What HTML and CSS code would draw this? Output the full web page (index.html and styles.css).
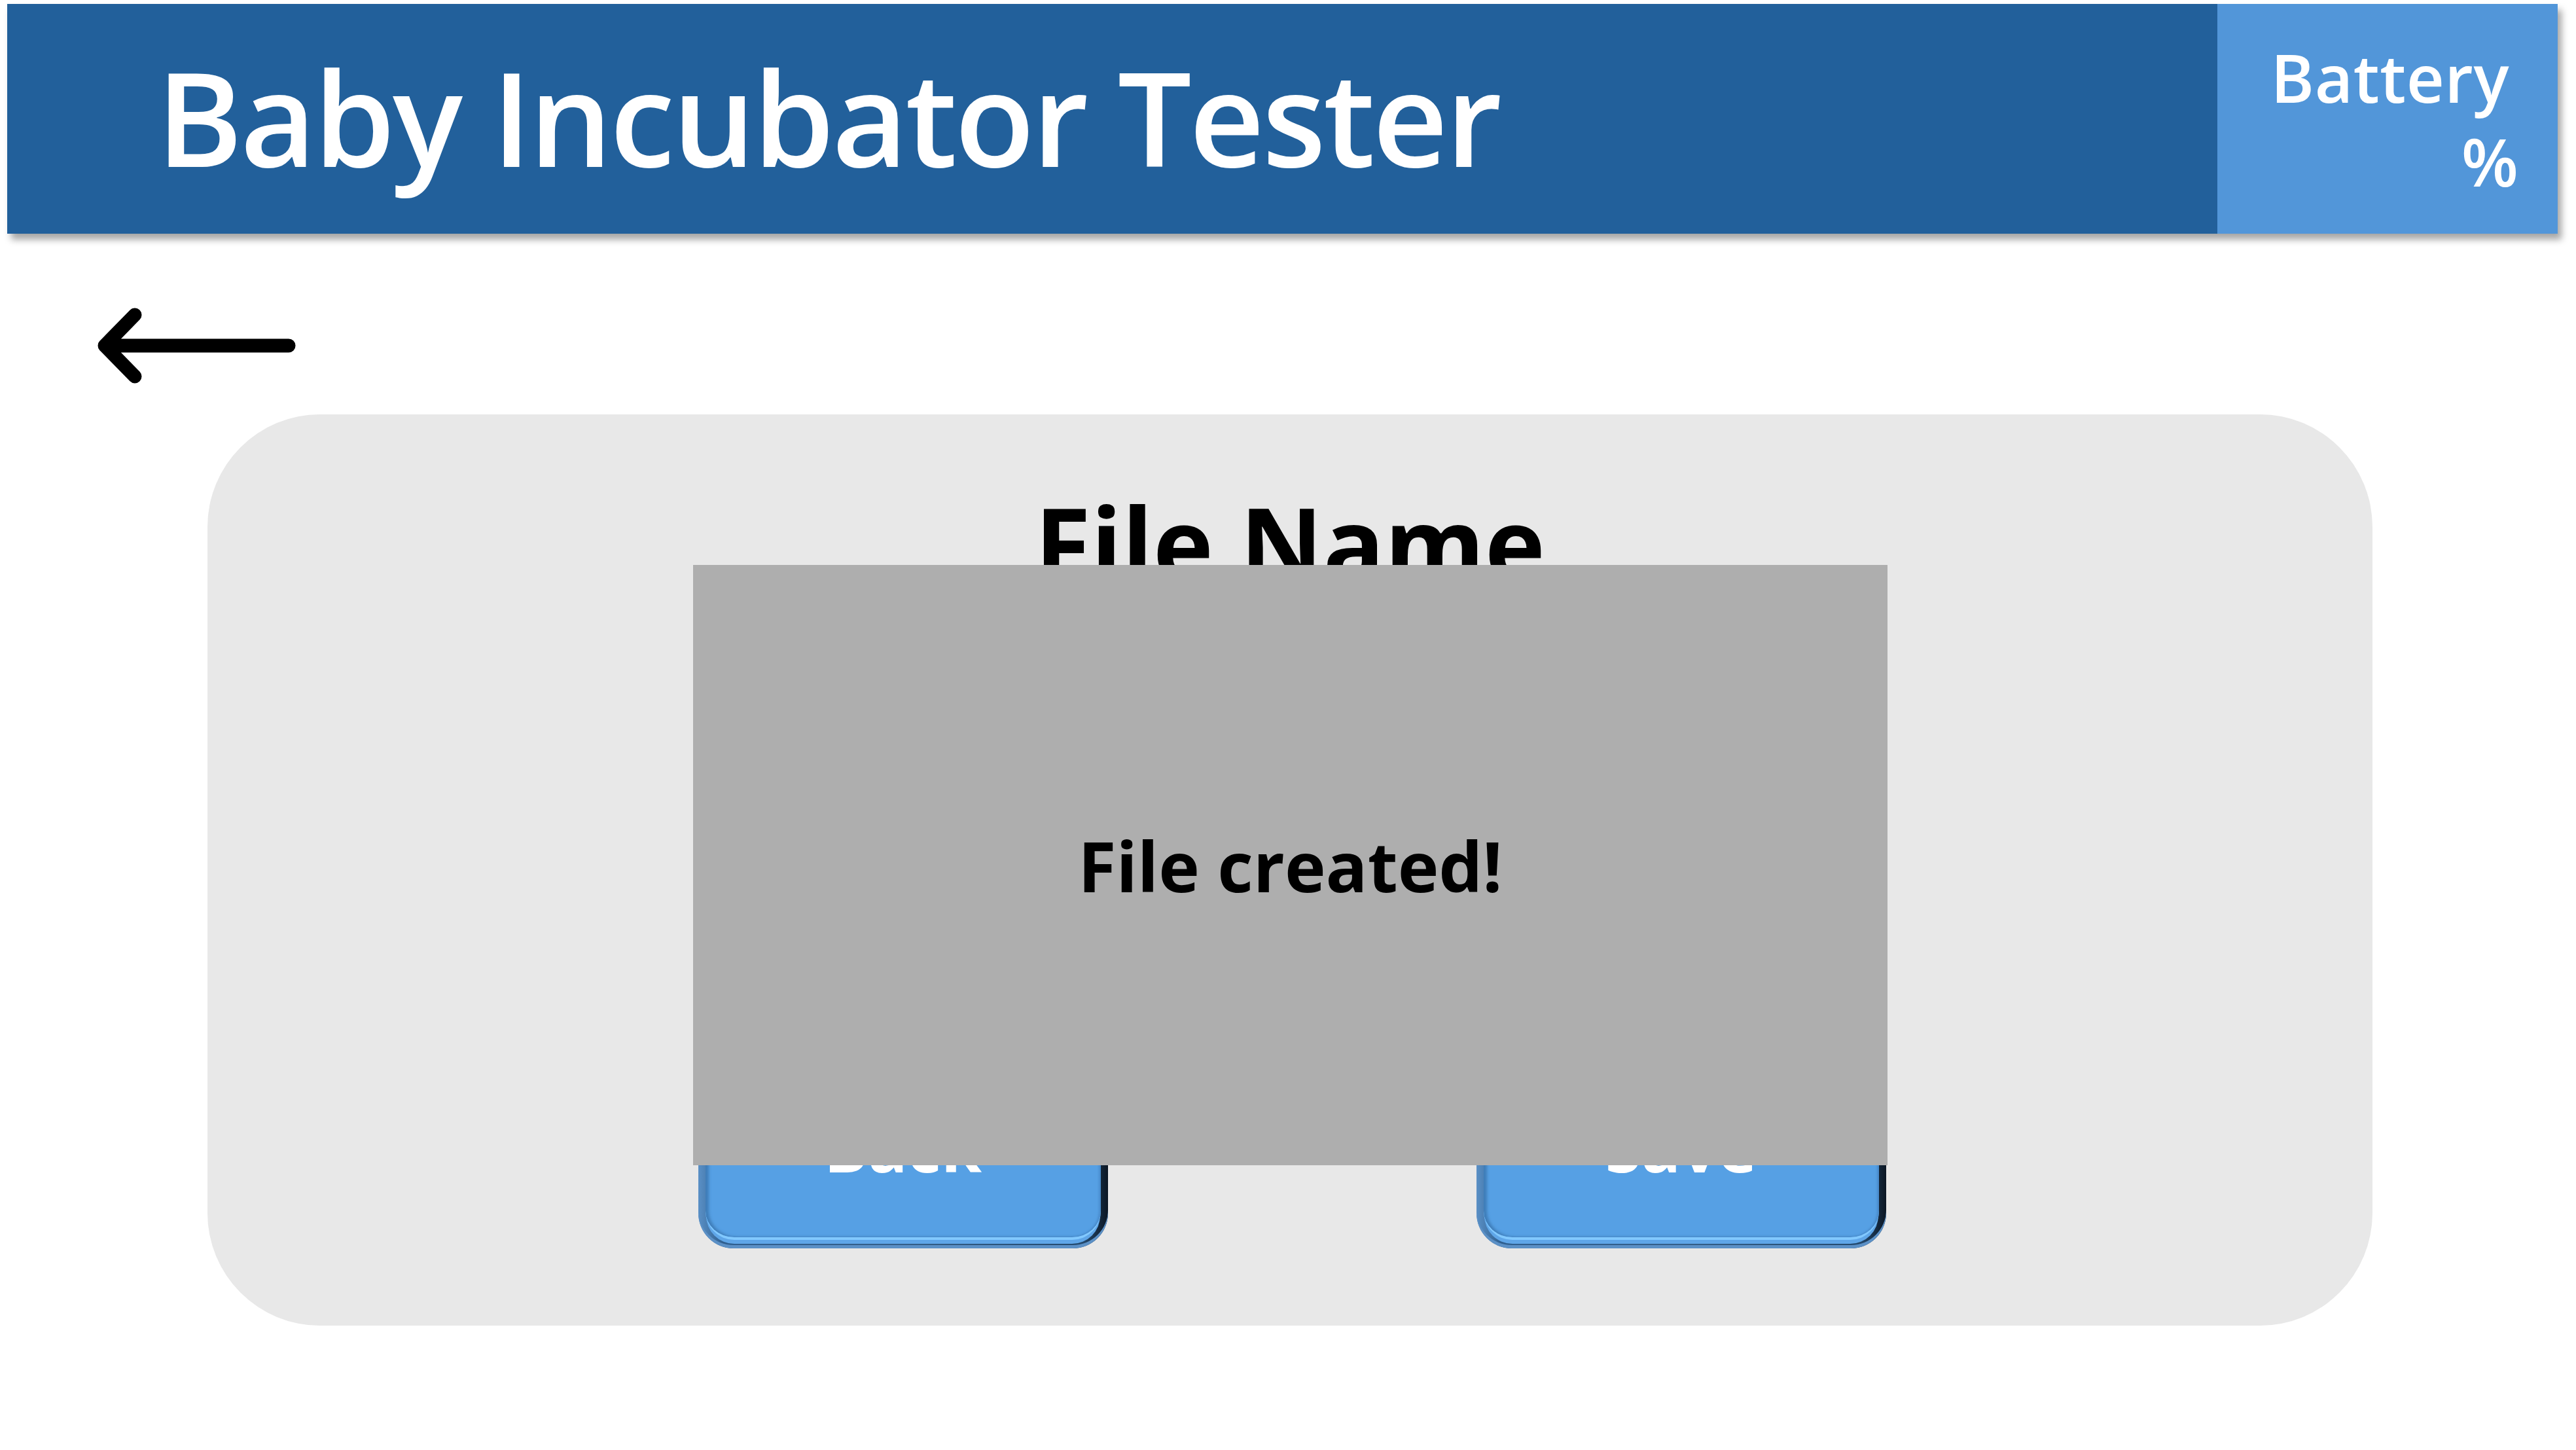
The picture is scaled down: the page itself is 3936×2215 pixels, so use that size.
FILE: index.html
```html
<!DOCTYPE html>
<html lang="en">
<head>
<meta charset="utf-8">
<title>Baby Incubator Tester</title>
<link rel="stylesheet" href="styles.css">
</head>
<body>
<header class="topbar">
  <h1 class="app-title">Baby Incubator Tester</h1>
  <div class="battery">
    <span class="battery-line">Battery</span>
    <span class="battery-line">%</span>
  </div>
</header>
<main class="page">
  <button class="back-link" aria-label="Back">
    <svg class="back-icon" viewBox="0 0 320 130" width="320" height="130">
      <path d="M301 63 H20 M66 16 L20 63 L66 110" fill="none" stroke="#000" stroke-width="21" stroke-linecap="round" stroke-linejoin="round"/>
    </svg>
  </button>
  <section class="card">
    <h2 class="card-title">File Name</h2>
    <div class="actions">
      <div class="btn"><div class="btn-face">Back</div></div>
      <div class="btn"><div class="btn-face">Save</div></div>
    </div>
    <div class="toast">File created!</div>
  </section>
</main>
</body>
</html>
```

FILE: styles.css
```css
* { box-sizing: border-box; }
html, body { margin: 0; padding: 0; background: #ffffff; }
body {
  width: 3936px;
  height: 2215px;
  overflow: hidden;
  font-family: "Open Sans", "Noto Sans", sans-serif;
}

.topbar {
  margin: 6px 28px 0 11px;
  height: 351px;
  background: #22609b;
  display: flex;
  align-items: stretch;
  box-shadow: 6px 9px 10px rgba(0, 0, 0, 0.35);
}

.app-title {
  flex: 1;
  margin: 0;
  padding: 0 0 8px 228px;
  display: flex;
  align-items: center;
  color: #ffffff;
  font-size: 200px;
  font-weight: 600;
  line-height: 1;
  letter-spacing: -3.8px;
}

.battery {
  width: 520px;
  background: #5296d9;
  display: flex;
  flex-direction: column;
  justify-content: center;
  align-items: flex-end;
  padding-right: 60px;
  color: #ffffff;
  font-size: 101px;
  font-weight: 600;
  line-height: 128px;
}
.battery-line { display: block; }
.battery-line:first-child { margin-right: 14px; letter-spacing: 0.5px; }

.page {
  display: flex;
  flex-direction: column;
}

.back-link {
  margin: 108px 0 0 140px;
  padding: 0;
  border: 0;
  background: none;
  width: 320px;
  height: 130px;
  display: block;
}
.back-icon { display: block; }

.card {
  position: relative;
  margin: 38px 0 0 317px;
  width: 3308px;
  height: 1392px;
  background: #e8e8e8;
  border-radius: 172px;
  display: flex;
  flex-direction: column;
  align-items: center;
  padding: 118px 0 118px 0;
}

.card-title {
  margin: 0;
  font-size: 156px;
  font-weight: 700;
  line-height: 1;
  color: #000000;
}

.actions {
  margin-top: auto;
  display: flex;
  gap: 563px;
  padding-left: 6px;
}

.btn {
  width: 626px;
  height: 306px;
  border-radius: 54px;
  background: linear-gradient(to right, #5a90c6 0%, #2f5f8f 6%, #355f88 50%, #24496d 94%, #0c1724 100%);
  padding: 9px 11px 13px 11px;
  box-shadow: inset 0 -5px 0 #5b90c6;
}

.btn-face {
  height: 100%;
  border-radius: 44px;
  background: #56a0e4;
  border-bottom: 4px solid #82c9ff;
  box-shadow: 0 7px 0 -1px #5fa6e8, inset 5px 0 4px #3f7db8, inset -3px 0 3px #4a8ccc;
  display: flex;
  align-items: center;
  justify-content: center;
  color: #ffffff;
  font-size: 100px;
  font-weight: 700;
  padding-top: 4px;
}

.toast {
  position: absolute;
  left: 742px;
  top: 230px;
  width: 1825px;
  height: 917px;
  background: #aeaeae;
  display: flex;
  align-items: center;
  justify-content: center;
  color: #000000;
  font-size: 106px;
  font-weight: 700;
  line-height: 1;
}
```
